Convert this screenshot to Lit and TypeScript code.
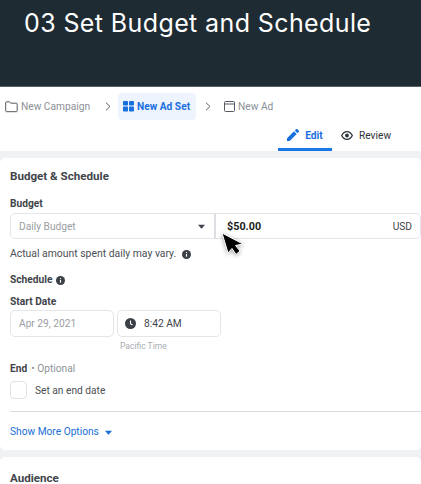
import { LitElement, html, css } from "lit";
import { customElement } from "lit/decorators.js";

const info = (size: number) => html`<svg class="info" width=${size} height=${size} viewBox="0 0 16 16"><circle cx="8" cy="8" r="8" fill="#3a4046"/><rect x="7" y="7" width="2" height="5" fill="#fff"/><circle cx="8" cy="4.6" r="1.2" fill="#fff"/></svg>`;

@customElement("app-root")
export class AppRoot extends LitElement {
  static styles = css`
    :host { display: block; width: 421px; height: 484px; overflow: hidden; position: relative; background: #f0f1f3; font-family: Roboto, "Liberation Sans", sans-serif; color: #3f444a; }
    .hero { height: 87px; box-sizing: border-box; background: #1f2b33; border-bottom: 1px solid #5a6268; padding: 7px 0 0 24px; color: #fff; font-family: Inter, "Open Sans", sans-serif; font-size: 25px; line-height: 33px; letter-spacing: 0.39px; }
    .top { background: #fff; height: 64px; box-sizing: border-box; padding-top: 6px; }
    .crumbs { display: flex; align-items: center; height: 27px; font-size: 10.2px; color: #8b9096; padding-left: 5px; }
    .crumb { display: flex; align-items: center; gap: 3px; }
    .chev { margin: 0 7px 0 15px; display: flex; }
    .chev.b { margin: 0 13px 0 9px; }
    .active { height: 27px; box-sizing: border-box; padding: 0 6px 0 5px; background: #edf4fd; border-radius: 4px; color: #1a6fe0; font-weight: 700; gap: 3px; }
    .tabs { display: flex; justify-content: flex-end; height: 31px; padding-right: 29px; font-size: 10.2px; }
    .tab { display: flex; align-items: center; height: 31px; box-sizing: border-box; padding-bottom: 1px; }
    .edit { width: 54px; justify-content: center; color: #1a6fe0; font-weight: 700; border-bottom: 3px solid #1a77e8; padding-top: 3px; margin-right: 9px; gap: 6px; }
    .review { color: #2f3439; gap: 6px; padding-top: 1px; width: 51px; }
    .card { background: #fff; border-radius: 5px 5px 0 0; margin-top: 7px; padding: 0 0 0 10px; }
    .card.main { height: 292px; border-radius: 5px; box-sizing: border-box; padding-top: 11px; }
    h2 { margin: 0; font-size: 11.6px; line-height: 14px; font-weight: 700; color: #3f444a; }
    .label { font-size: 10.2px; line-height: 14px; font-weight: 700; color: #3f444a; display: flex; align-items: center; gap: 4px; }
    .budget-label { margin-top: 14px; }
    .budget { display: flex; height: 26px; margin-top: 2px; box-sizing: border-box; border: 1px solid #e3e5e8; border-radius: 5px; font-size: 10.2px; }
    .sel { width: 205px; box-sizing: border-box; border-right: 2px solid #dcdee1; display: flex; align-items: center; justify-content: space-between; padding: 0 9px 0 8px; color: #9a9ea3; }
    .amt { flex: 1; display: flex; align-items: center; justify-content: space-between; padding: 0 8px 0 11px; color: #3f444a; }
    .amt b { color: #1a1d20; font-size: 10.8px; }
    .note { display: flex; align-items: center; gap: 6px; font-size: 10.4px; line-height: 14px; margin-top: 8px; color: #4a4f55; }
    .sched { margin-top: 12px; }
    .start { margin-top: 8px; }
    .dates { display: flex; gap: 3px; margin-top: 1px; }
    .field { width: 104px; height: 27px; box-sizing: border-box; border: 1px solid #e3e5e8; border-radius: 5px; display: flex; align-items: center; padding-left: 8px; font-size: 10.2px; color: #9a9ea3; }
    .time { color: #3f444a; gap: 8px; padding-left: 7px; }
    .pt { font-size: 8.500px; line-height: 12px; margin: 3px 0 0 110px; color: #a9adb2; }
    .end { margin-top: 10px; }
    .end span { font-weight: 400; color: #8f9398; }
    .check { display: flex; align-items: center; gap: 8px; margin-top: 5px; font-size: 10.2px; color: #4a4f55; }
    .box { width: 17px; height: 18px; box-sizing: border-box; border: 1px solid #dfe1e4; border-radius: 4px; }
    hr { border: 0; height: 1px; background: #d9dbde; margin: 12px 0 0 0; }
    .more { display: flex; align-items: center; gap: 6px; margin-top: 13px; font-size: 10.2px; line-height: 14px; color: #1a6fd6; }
    .aud { padding-top: 14px; height: 60px; box-sizing: border-box; }
    .cursor { position: absolute; left: 219px; top: 231px; filter: drop-shadow(0 1px 2px rgba(0,0,0,.35)); }
  `;

  render() {
    return html`
      <div class="hero">03 Set Budget and Schedule</div>
      <div class="top">
        <div class="crumbs">
          <div class="crumb">
            <svg width="13" height="13" viewBox="0 0 13 13" fill="none" stroke="#55595f" stroke-width="1"><path d="M.7 2.6c0-.5.3-.8.8-.8h3l1.2 1.4h5.700c.5 0 .8.3.8.8v6.900c0 .5-.3.8-.8.8h-9.900c-.5 0-.8-.3-.8-.8z"/></svg>
            New Campaign
          </div>
          <span class="chev"><svg width="6" height="9" viewBox="0 0 6 9" fill="none" stroke="#5f6368"><path d="M1 .7 5 4.500 1 8.300"/></svg></span>
          <div class="crumb active">
            <svg width="11" height="11" viewBox="0 0 11 11" fill="#1a6fe0"><rect width="5" height="4.500" rx=".7"/><rect x="6" width="5" height="4.500" rx=".7"/><rect y="5.500" width="5" height="5" rx=".7"/><rect x="6" y="5.500" width="5" height="5" rx=".7"/></svg>
            New Ad Set
          </div>
          <span class="chev b"><svg width="6" height="9" viewBox="0 0 6 9" fill="none" stroke="#5f6368"><path d="M1 .7 5 4.500 1 8.300"/></svg></span>
          <div class="crumb">
            <svg width="11" height="11" viewBox="0 0 11 11" fill="none" stroke="#55595f"><rect x=".5" y=".5" width="10" height="10" rx="1"/><path d="M.5 3h10"/></svg>
            New Ad
          </div>
        </div>
        <div class="tabs">
          <div class="tab edit">
            <svg width="12" height="12" viewBox="0 0 12 12" fill="#1a6fe0"><path d="M0 12V9.300L7 2.300 9.700 5 2.700 12zM7.800 1.500 9 .3c.4-.4 1-.4 1.400 0l1.300 1.300c.4.4.4 1 0 1.400L10.500 4.200z"/></svg>
            Edit
          </div>
          <div class="tab review">
            <svg width="12" height="9" viewBox="0 0 12 9"><path fill-rule="evenodd" fill="#2f3439" d="M6 0c2.700 0 5 1.800 6 4.500C11 7.200 8.700 9 6 9S1 7.200 0 4.500C1 1.800 3.300 0 6 0zm0 1.300c-2 0-3.700 1.300-4.600 3.200C2.300 6.400 4 7.700 6 7.700s3.700-1.300 4.600-3.200C9.700 2.600 8 1.300 6 1.300zM6 2.600a1.900 1.900 0 1 1 0 3.800 1.900 1.900 0 0 1 0-3.800z"/></svg>
            Review
          </div>
        </div>
      </div>
      <div class="card main">
        <h2>Budget &amp; Schedule</h2>
        <div class="label budget-label">Budget</div>
        <div class="budget">
          <div class="sel">Daily Budget
            <svg width="7" height="5" viewBox="0 0 8 5" fill="#3f444a"><path d="M0 .5h8L4.600 4.500a.8.8 0 0 1-1.200 0z"/></svg>
          </div>
          <div class="amt"><b>$50.00</b><span>USD</span></div>
        </div>
        <div class="note">Actual amount spent daily may vary. ${info(9)}</div>
        <div class="label sched">Schedule ${info(9)}</div>
        <div class="label start">Start Date</div>
        <div class="dates">
          <div class="field">Apr 29, 2021</div>
          <div class="field time">
            <svg width="11" height="11" viewBox="0 0 11 11"><circle cx="5.500" cy="5.500" r="5.500" fill="#3a4046"/><path d="M5.500 2.500v3.200l2 1.300" fill="none" stroke="#fff" stroke-width="1.100"/></svg>
            8:42 AM
          </div>
        </div>
        <div class="pt">Pacific Time</div>
        <div class="label end">End <span>• Optional</span></div>
        <div class="check"><div class="box"></div>Set an end date</div>
        <hr />
        <div class="more">Show More Options
          <svg width="7" height="5" viewBox="0 0 8 5" fill="#1a6fd6"><path d="M0 .5h8L4.600 4.500a.8.8 0 0 1-1.200 0z"/></svg>
        </div>
      </div>
      <div class="card aud"><h2>Audience</h2></div>
      <svg class="cursor" width="27" height="27" viewBox="0 0 27 27"><path d="M3 2 9 22 13 17.500 17 23.500 21 20 16.500 14.500 24 13z" fill="#000" stroke="#fff" stroke-width="1" stroke-linejoin="round"/></svg>
    `;
  }
}
